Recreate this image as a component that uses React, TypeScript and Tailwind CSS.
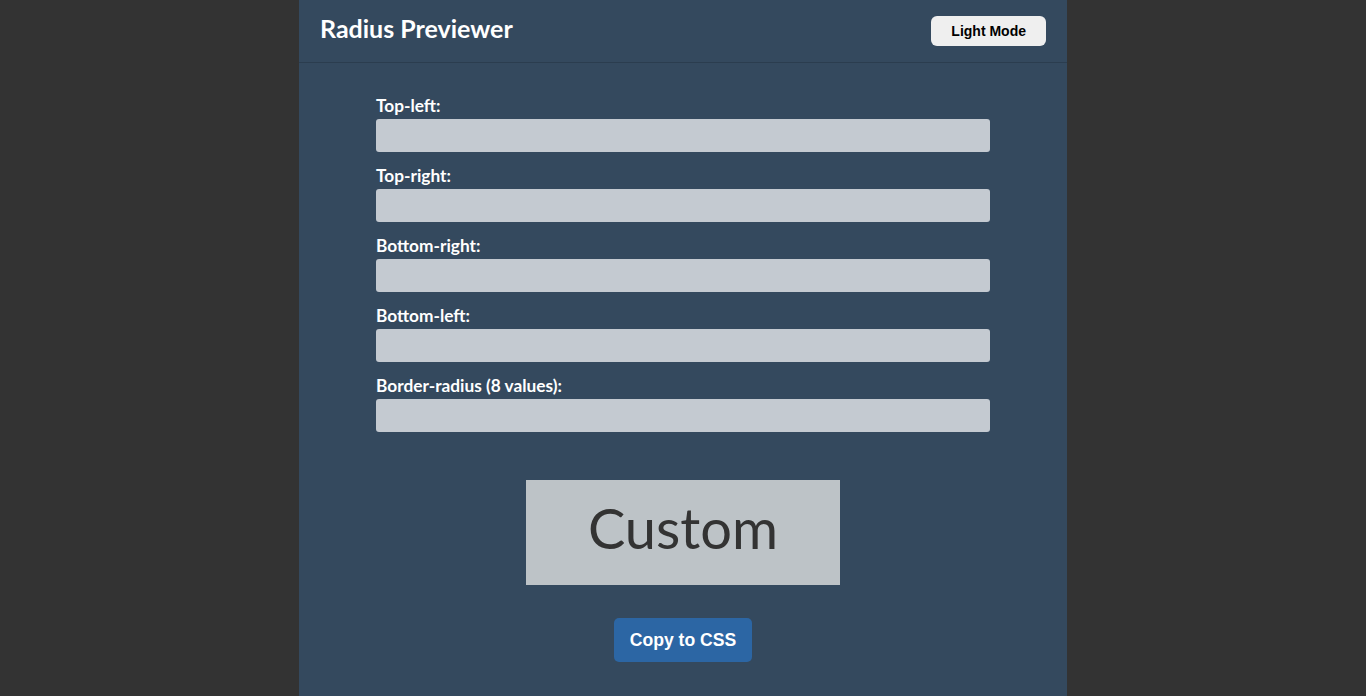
const fields = [
  "Top-left:",
  "Top-right:",
  "Bottom-right:",
  "Bottom-left:",
  "Border-radius (8 values):",
];

export default function App() {
  return (
    <div className="min-h-screen bg-[#333333] flex justify-center font-['Lato',sans-serif]">
      <main className="w-[768px] min-h-screen bg-[#34495e] text-white">
        <header className="h-[63px] flex items-center justify-between pl-[21px] pr-[21px] border-b border-[#2b3d4f]">
          <h1 className="text-[25px] font-bold leading-[30px] pb-[6px]">Radius Previewer</h1>
          <button className="h-[30px] px-[20px] rounded-[6px] bg-[#efefef] text-black text-[14px] font-bold font-['Liberation_Sans',Arial,sans-serif]">
            Light Mode
          </button>
        </header>

        <form className="w-[614px] mx-auto pt-[32px] flex flex-col gap-[13px]">
          {fields.map((label) => (
            <div key={label} className="flex flex-col gap-[3px]">
              <label className="text-[17.3px] font-bold leading-[21px]">{label}</label>
              <input className="h-[33px] rounded-[3px] bg-[#c4cad1] outline-none" />
            </div>
          ))}
        </form>

        <div className="flex justify-center mt-[48px]">
          <div className="w-[314px] h-[105px] pb-[10px] bg-[#bdc3c7] text-[#333333] text-[56px] flex items-center justify-center">
            Custom
          </div>
        </div>

        <div className="flex justify-center mt-[33px] pb-[34px]">
          <button className="h-[44px] px-[16px] rounded-[5px] bg-[#2c66a4] text-white text-[17.6px] font-bold font-['Liberation_Sans',Arial,sans-serif]">
            Copy to CSS
          </button>
        </div>
      </main>
    </div>
  );
}
